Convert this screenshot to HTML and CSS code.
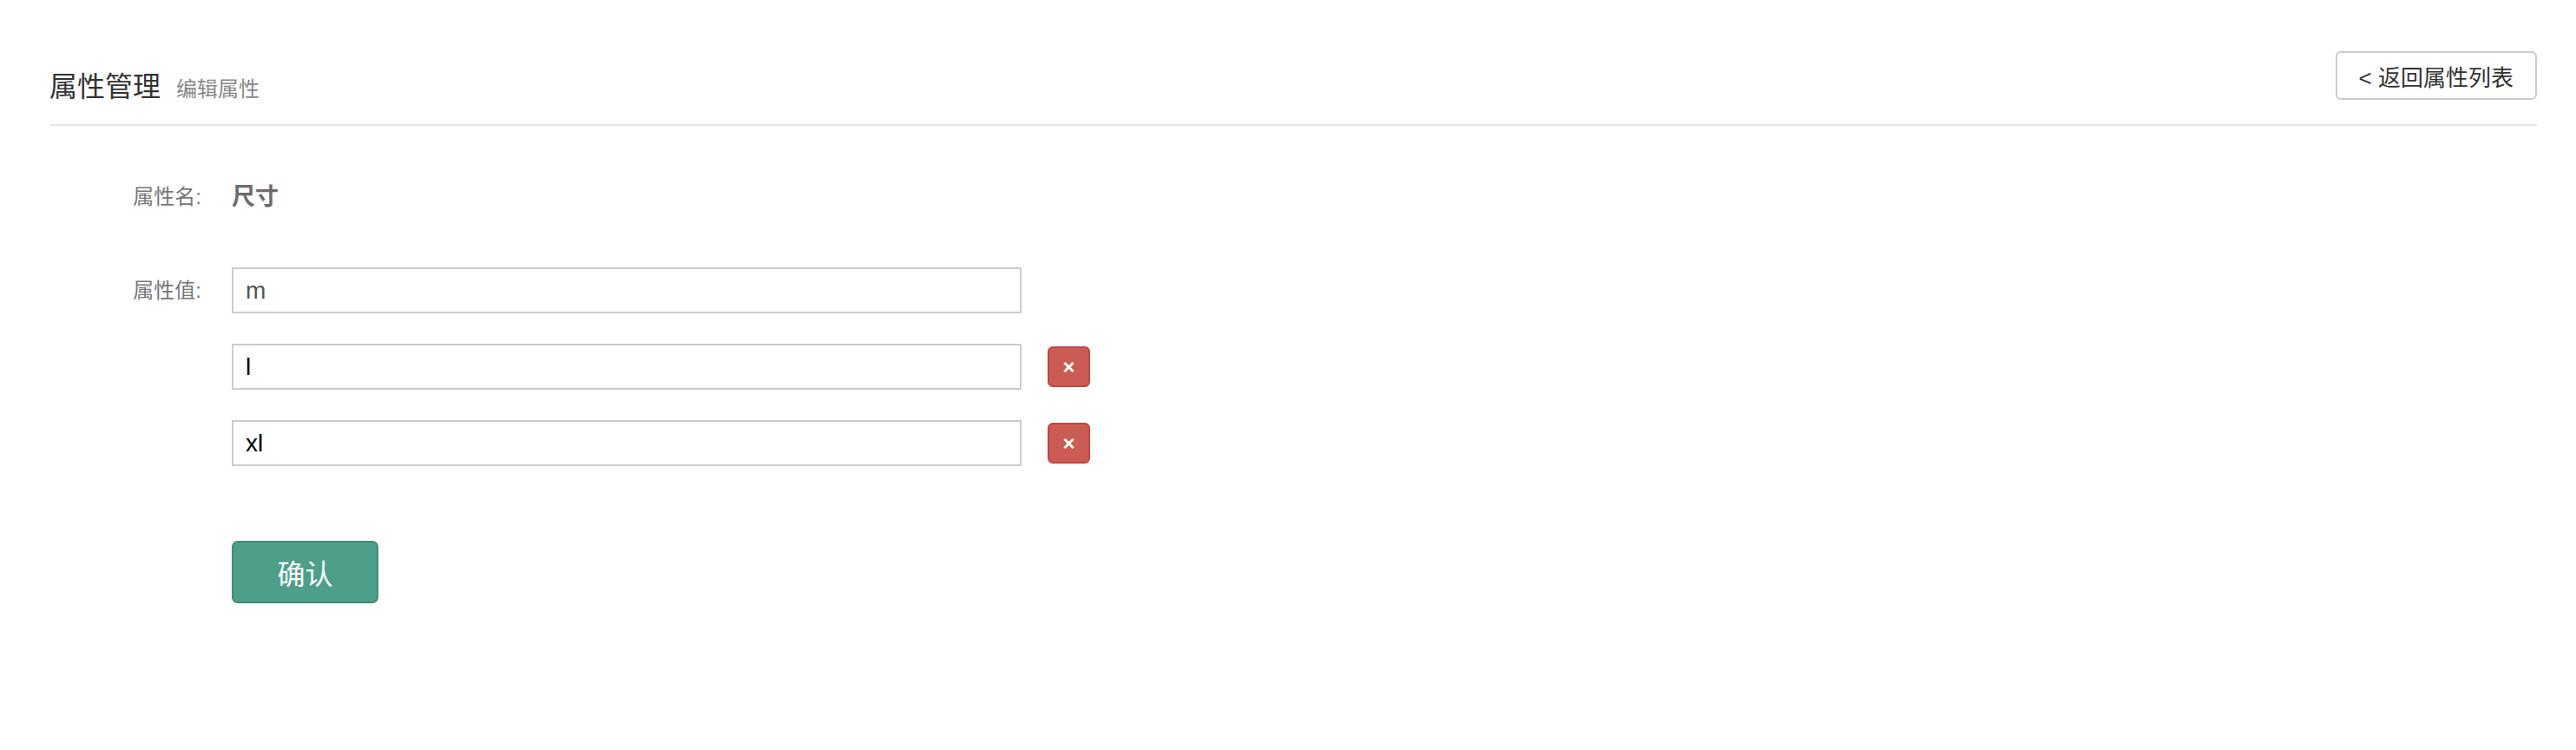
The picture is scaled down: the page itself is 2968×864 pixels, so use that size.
FILE: index.html
```html
<!DOCTYPE html>
<html lang="zh-CN">
<head>
    <meta charset="UTF-8">
    <title>属性管理 - 编辑属性</title>
    <link rel="stylesheet" href="styles.css">
</head>
<body>

    <div class="page">
        <!-- Page header -->
        <div class="page-header">
            <h1 class="page-title">属性管理<small>编辑属性</small></h1>
            <a class="btn-back" href="attr_list.html">&lt; 返回属性列表</a>
        </div>

        <!-- Edit form -->
        <form class="attr-form" method="POST" action="update_attr.php">
            <div class="form-row name-row">
                <label>属性名:</label>
                <div class="static-value">尺寸</div>
            </div>

            <div class="form-row values-row">
                <label>属性值:</label>
                <div class="value-list">
                    <div class="value-item">
                        <input type="text" name="values[]" value="m" class="first-value">
                    </div>
                    <div class="value-item">
                        <input type="text" name="values[]" value="l">
                        <button type="button" class="btn-remove">&times;</button>
                    </div>
                    <div class="value-item">
                        <input type="text" name="values[]" value="xl">
                        <button type="button" class="btn-remove">&times;</button>
                    </div>
                </div>
            </div>

            <div class="form-row">
                <span></span>
                <div><button type="submit" class="btn-submit">确认</button></div>
            </div>
        </form>
    </div>

</body>
</html>
```

FILE: styles.css
```css
* {
    margin: 0;
    padding: 0;
    box-sizing: border-box;
    font-family: "Liberation Sans", "Noto Sans CJK SC", sans-serif;
}

body {
    background-color: #fff;
}

.page {
    padding: 59px 45px 0 57px;
}

/* Header */
.page-header {
    display: flex;
    justify-content: space-between;
    align-items: flex-start;
    padding-bottom: 18px;
    border-bottom: 2px solid #e6e6e6;
}

.page-title {
    margin-top: 19px;
    font-size: 32px;
    line-height: 44px;
    font-weight: normal;
    color: #333;
}

.page-title small {
    margin-left: 18px;
    font-size: 24px;
    color: #888;
}

.btn-back {
    display: flex;
    align-items: center;
    height: 56px;
    padding: 0 25px;
    border: 2px solid #ccc;
    border-radius: 6px;
    color: #333;
    font-size: 26px;
    text-decoration: none;
}

/* Form */
.attr-form {
    margin-top: 62px;
}

.form-row {
    display: grid;
    grid-template-columns: 175px 1fr;
    column-gap: 35px;
}

.form-row label {
    text-align: right;
    font-size: 24px;
    color: #777;
}

.name-row {
    margin-bottom: 61px;
}

.name-row label,
.static-value {
    line-height: 40px;
}

.static-value {
    font-size: 27px;
    font-weight: bold;
    color: #6c6c6c;
}

.values-row {
    margin-bottom: 86px;
}

.values-row label {
    line-height: 53px;
}

.value-list {
    display: flex;
    flex-direction: column;
    gap: 35px;
}

.value-item {
    display: flex;
    align-items: center;
    gap: 30px;
}

.value-item input {
    width: 910px;
    height: 53px;
    padding: 0 14px;
    border: 2px solid #ccc;
    font-size: 28px;
    color: #000;
    outline: none;
}

.value-item input.first-value {
    color: #555;
}

.btn-remove {
    width: 49px;
    height: 47px;
    background-color: #cb5b53;
    border: 2px solid #c2473f;
    border-radius: 6px;
    color: #fff;
    font-size: 24px;
    font-weight: bold;
    line-height: 1;
    cursor: pointer;
}

.btn-submit {
    width: 169px;
    height: 72px;
    background-color: #4e9f8a;
    border: 2px solid #428b77;
    border-radius: 7px;
    color: #fff;
    font-size: 32px;
    cursor: pointer;
}
```
